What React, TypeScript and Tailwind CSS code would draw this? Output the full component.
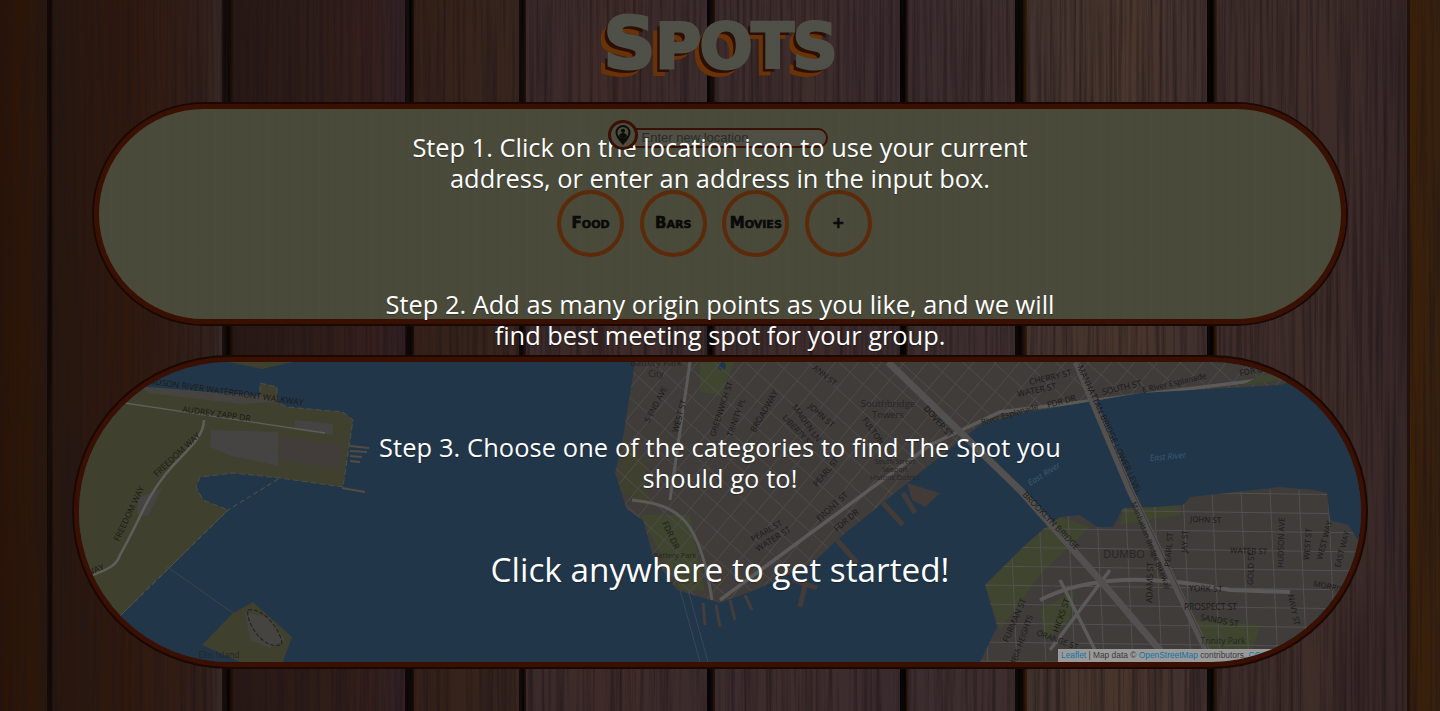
import React from 'react';

const planks = [
  { id: 'p0', className: 'w-[47px] bg-[linear-gradient(90deg,#2a1306,#2e1607_60%,#27170f)]' },
  { id: 'g0', className: 'w-[6px] bg-[linear-gradient(90deg,#140a08,#0d0503_50%,#21110a)]' },
  { id: 'p1', className: 'w-[169px] bg-[linear-gradient(90deg,#27170f,#30180d_45%,#33201a_90%,#382a27)]' },
  { id: 'g1', className: 'w-[11px] bg-[linear-gradient(90deg,#1c100c,#070302_60%,#261206)]' },
  { id: 'p2', className: 'w-[172px] bg-[linear-gradient(90deg,#281814,#2f1d18_55%,#351f1c_80%,#302125)]' },
  { id: 'g2', className: 'w-[9px] bg-[linear-gradient(90deg,#140a08,#030100_60%,#1f0e05)]' },
  { id: 'p3', className: 'w-[105px] bg-[linear-gradient(90deg,#342017,#38261e)]' },
  { id: 'g3', className: 'w-[7px] bg-[linear-gradient(90deg,#110806,#040201_60%,#2a1408)]' },
  { id: 'p4', className: 'w-[181px] bg-[linear-gradient(90deg,#3a2a2a,#3f2b29_50%,#3b2c2d)]' },
  { id: 'g4', className: 'w-[8px] bg-[linear-gradient(90deg,#0a0605,#030100_50%,#2b1408)]' },
  { id: 'p5', className: 'w-[185px] bg-[linear-gradient(90deg,#3b2c2c,#3f2d2c_50%,#392b2e)]' },
  { id: 'g5', className: 'w-[8px] bg-[linear-gradient(90deg,#050201,#040201_65%,#3a1d08)]' },
  { id: 'p6', className: 'w-[107px] bg-[linear-gradient(90deg,#3b2d2e,#3e2e2e)]' },
  { id: 'g6', className: 'w-[12px] bg-[linear-gradient(90deg,#0a0504,#040201_55%,#3d2009)]' },
  { id: 'p7', className: 'w-[180px] bg-[linear-gradient(90deg,#43332e,#49362c_60%,#3f2f2e)]' },
  { id: 'g7', className: 'w-[10px] bg-[linear-gradient(90deg,#080403,#040201_55%,#3d2009)]' },
  { id: 'p8', className: 'w-[190px] bg-[linear-gradient(90deg,#3d2c2a,#3f2d29_50%,#362727)]' },
  { id: 'g8', className: 'w-[3px] bg-[#221109]' },
  { id: 'p9', className: 'flex-1 bg-[linear-gradient(90deg,#3c2008,#35200f)]' },
];

// street labels: [x, y, rotation, text, size]
const labels: [number, number, number, string, number][] = [
  [143, 383, 8, 'HUDSON RIVER WATERFRONT WALKWAY', 8.5],
  [182, 412, 8, 'AUDREY ZAPP DR', 8.5],
  [157, 477, -43, 'FREEDOM WAY', 8.5],
  [119, 542, -65, 'FREEDOM WAY', 8.5],
  [88, 576, -22, 'WAY', 8.5],
  [649, 423, -62, 'S END AVE', 8],
  [678, 433, -75, 'WEST ST', 8.5],
  [715, 437, -72, 'GREENWICH ST', 8],
  [732, 437, -70, 'TRINITY PL', 8],
  [755, 433, -60, 'BROADWAY', 8.5],
  [792, 407, 55, 'MAIDEN LN', 8],
  [782, 418, 47, 'LIBERTY ST', 8],
  [808, 407, 42, 'JOHN ST', 8],
  [812, 369, 38, 'ANN ST', 8],
  [862, 420, 55, 'FULTON', 8],
  [923, 409, 48, 'DOVER ST', 8.5],
  [817, 487, -50, 'PEARL ST', 8],
  [820, 522, -43, 'FRONT ST', 8.5],
  [837, 532, -40, 'FDR DR', 8.5],
  [753, 542, -30, 'PEARL ST', 8],
  [758, 552, -32, 'WATER ST', 8.5],
  [662, 523, 65, 'FDR DR', 8.5],
  [1030, 385, -13, 'CHERRY ST', 8.5],
  [1018, 397, -12, 'WATER ST', 8.5],
  [1048, 408, -15, 'FDR DR', 8.5],
  [1103, 395, -13, 'SOUTH ST', 8.5],
  [1143, 393, -13, 'E River Esplanade', 8],
  [1240, 376, -10, 'FDR DR', 8.5],
  [982, 425, -16, 'River Esplanade', 8],
  [1077, 367, 65, 'MANHATTAN BRIDGE LOWER LEVEL', 8.5],
  [1022, 495, 46, 'BROOKLYN BRIDGE', 8.5],
  [1131, 503, 68, 'Manhattan Bridge Bikeway', 7.5],
  [1190, 522, 2, 'JOHN ST', 8],
  [1230, 553, 2, 'WATER ST', 8],
  [1170, 567, -85, 'PEARL ST', 8],
  [1187, 553, -88, 'JAY ST', 8],
  [1152, 603, -88, 'ADAMS ST', 8.5],
  [1253, 585, -88, 'GOLD ST', 8],
  [1283, 568, -88, 'HUDSON AVE', 8],
  [1309, 560, -85, 'WEST ST', 8],
  [1322, 560, -75, 'WEST WAY', 8],
  [1340, 568, -75, 'EAST WAY', 8],
  [1313, 586, 12, 'MORRIS', 8],
  [1189, 591, 2, 'YORK ST', 8.5],
  [1184, 610, 0, 'PROSPECT ST', 8.5],
  [1200, 620, 10, 'SANDS ST', 8.5],
  [1288, 595, 78, 'NAVY ST', 8],
  [1008, 643, -67, 'FURMAN ST', 8.5],
  [1058, 633, -70, 'HICKS ST', 8.5],
  [1036, 635, 20, 'ORANGE ST', 8],
  [1007, 688, -70, 'COLUMBIA HEIGHTS', 8],
];

const places: [number, number, string, number][] = [
  [656, 366, 'Battery Park', 9],
  [656, 377, 'City', 9],
  [888, 407, 'Southbridge', 9.5],
  [888, 418, 'Towers', 9.5],
  [895, 464, 'South Street', 7],
  [895, 472, 'Seaport', 7],
  [895, 480, 'Historic District', 7],
  [675, 558, 'Battery Park', 7.5],
  [1124, 558, 'DUMBO', 11],
  [1223, 644, 'Trinity Park', 8.5],
  [219, 658, 'Ellis Island', 8.5],
];

const manhattan =
  '635,362 623,437 615,473 627,510 643,520 653,557 677,590 720,603 760,588 813,563 837,540 927,467 980,425 1023,413 1140,393 1280,385 1310,375 1340,362';
const brooklyn =
  '980,662 997,627 985,585 1025,545 1042,530 1060,517 1080,515 1097,527 1113,527 1123,508 1157,507 1183,505 1190,497 1280,487 1315,490 1327,493 1330,520 1348,525 1358,540 1365,520 1365,665';
const jersey =
  '78,400 137,387 260,397 260,383 277,387 277,402 287,407 343,412 353,420 343,487 280,478 233,473 200,477 196,487 203,500 228,510 118,618 78,618';
const ellis = '253,602 292,637 283,662 240,662 202,645 233,613';

// street grids, rendered clipped to the land
const range = (from: number, to: number, step: number) => {
  const out: number[] = [];
  for (let v = from; v < to; v += step) out.push(v);
  return out;
};
const manhattanA = range(-60, 1200, 23);
const manhattanB = range(380, 1700, 31);
const brooklynV = range(980, 1365, 29);
const brooklynH = range(490, 665, 19);

function MapLayer() {
  return (
    <svg className="block w-full h-full" viewBox="79 362 1282 300" preserveAspectRatio="none">
      <defs>
        <clipPath id="clip-manhattan"><polygon points={manhattan} /></clipPath>
        <clipPath id="clip-brooklyn"><polygon points={brooklyn} /></clipPath>
      </defs>
      <rect x="0" y="300" width="1440" height="400" fill="#22364a" />

      {/* jersey side */}
      <polygon points={jersey} fill="#3f412e" stroke="#54544a" strokeWidth="0.8" strokeDasharray="6 3" />
      <polygon points="228,362 293,362 262,369" fill="#3f412e" />
      <polygon points="137,386 260,396 280,402 240,404 150,393" fill="#464441" />
      <polygon points="211,430 278,432 278,466 232,456 210,447" fill="#464442" />
      <polygon points="281,437 343,445 340,468 278,460" fill="#423d3a" />
      <polygon points="295,420 333,424 333,435 295,430" fill="#464442" />
      <polygon points="138,498 162,488 148,516 137,515" fill="#464442" />
      <path d="M118,402 L325,433" stroke="#5f5e5a" strokeWidth="1.300" fill="none" />
      <path d="M204,420 C204,440 180,455 165,475 C145,500 140,520 120,555 C115,570 100,570 88,578" stroke="#5f5e5a" strokeWidth="2.500" fill="none" />
      <path d="M118,618 L228,510 L280,478" stroke="#54544a" strokeWidth="1" strokeDasharray="5 3" fill="none" />
      <path d="M166,566 L233,613" stroke="#54544a" strokeWidth="0.500" fill="none" />
      <path d="M350,446 L369,448 M350,451 L367,452 M350,456 L362,457 M350,461 L360,462 M342,488 L365,492" stroke="#544b42" strokeWidth="1.800" fill="none" />

      {/* ellis island */}
      <polygon points={ellis} fill="#3f412e" />
      <polygon points="245,612 270,618 285,640 270,648 250,640" fill="#464441" />
      <path d="M248,610 C268,606 288,645 280,645 C262,650 245,620 248,610 Z" fill="none" stroke="#22221f" strokeWidth="1.100" strokeDasharray="4 2" />

      {/* manhattan */}
      <polygon points={manhattan} fill="#3f3c3a" />
      <g clipPath="url(#clip-manhattan)">
        <polygon points="700,362 735,362 720,395 700,392" fill="#3f452e" />
        <circle cx="722" cy="366" r="4" fill="#22364a" />
        <polygon points="640,515 690,515 705,590 680,590" fill="#3f452e" />
        <polygon points="623,440 645,460 650,510 620,490" fill="#3f412e" />
        {manhattanA.map((o) => (
          <line key={`a${o}`} x1={o + 200} y1="700" x2={o + 500} y2="340" stroke="#4f4d4b" strokeWidth="1" />
        ))}
        {manhattanB.map((o) => (
          <line key={`b${o}`} x1={o} y1="340" x2={o + 400} y2="700" stroke="#4f4d4b" strokeWidth="1" />
        ))}
        <path d="M690,362 L670,500 M632,500 C680,505 700,520 712,600" stroke="#5c5a58" strokeWidth="3" fill="none" />
        <path d="M720,600 L930,445 L1000,412 L1340,370" stroke="#5c5a58" strokeWidth="3.500" fill="none" />
      </g>
      <polygon points="907,483 940,493 925,507 912,500" fill="#423b37" />
      <path d="M883,503 L903,525 M903,493 L915,513 M837,540 L857,563 M793,580 L817,588 M805,585 L800,607" stroke="#423b37" strokeWidth="5" fill="none" />
      <path d="M703,603 L705,625 M716,605 L720,627 M730,600 L735,620 M745,595 L752,610" stroke="#443d3a" strokeWidth="3" fill="none" />

      {/* brooklyn */}
      <polygon points={brooklyn} fill="#3f3c3a" />
      <g clipPath="url(#clip-brooklyn)">
        <polygon points="985,585 1025,545 1060,517 1090,527 1040,575 1000,630" fill="#3f452e" />
        <polygon points="1123,508 1180,503 1180,515 1120,525" fill="#3f452e" />
        <polygon points="1195,620 1260,625 1250,662 1205,662" fill="#3f452e" />
        <polygon points="1040,610 1075,590 1070,620 1045,640" fill="#3f452e" />
        {brooklynV.map((x) => (
          <line key={`v${x}`} x1={x} y1="490" x2={x + 8} y2="665" stroke="#53514f" strokeWidth="1" />
        ))}
        {brooklynH.map((y) => (
          <line key={`h${y}`} x1="980" y1={y} x2="1365" y2={y + 5} stroke="#53514f" strokeWidth="1" />
        ))}
        <path d="M1040,600 C1090,575 1150,575 1230,590 L1290,592" stroke="#5c5a58" strokeWidth="4" fill="none" />
        <path d="M1050,650 L1110,570 M1100,660 L1060,580" stroke="#5c5a58" strokeWidth="3.500" fill="none" />
      </g>
      <polygon points="1260,376 1290,372 1280,380 1240,386" fill="#3f452e" />

      {/* bridges */}
      <path d="M888,362 L1020,490 L1100,580 L1170,662" stroke="#53514f" strokeWidth="7" fill="none" />
      <path d="M1076,362 L1130,490 L1212,662" stroke="#53514f" strokeWidth="7" fill="none" />
      <path d="M1078,362 L1132,490 L1214,662" stroke="#3e3c38" strokeWidth="1" fill="none" />
      <path d="M680,590 L700,662 M688,590 L708,662" stroke="#3c4c5a" strokeWidth="0.800" fill="none" />

      <g fontFamily="'Open Sans', sans-serif" fill="#1a1a17">
        {labels.map(([x, y, r, t, s]) => (
          <text key={`${t}${x}`} x={x} y={y} fontSize={s} transform={`rotate(${r} ${x} ${y})`}>{t}</text>
        ))}
        {places.map(([x, y, t, s]) => (
          <text key={`${t}${x}`} x={x} y={y} fontSize={s} textAnchor="middle" fill="#262522">{t}</text>
        ))}
        <text x="1030" y="486" fontSize="8.500" fontStyle="italic" fill="#3d5b70" transform="rotate(-32 1030 486)">East River</text>
        <text x="1150" y="461" fontSize="8.500" fontStyle="italic" fill="#3d5b70" transform="rotate(-5 1150 461)">East River</text>
      </g>
    </svg>
  );
}

function PinIcon() {
  return (
    <svg width="16" height="20" viewBox="0 0 16 20" aria-hidden="true">
      <path d="M8 0a7.500 7.500 0 0 0-7.500 7.500C.5 12.500 8 20 8 20s7.500-7.500 7.500-12.500A7.500 7.500 0 0 0 8 0z" fill="#0d0d0b" />
      <circle cx="8" cy="7.500" r="5.500" fill="#4c4c3f" />
      <circle cx="8" cy="5.800" r="2.100" fill="#0d0d0b" />
      <path d="M3.900 11.200c.5-2.300 2.300-3.100 4.100-3.100s3.600.8 4.100 3.100a5.500 5.500 0 0 1-8.200 0z" fill="#0d0d0b" />
    </svg>
  );
}

const categories = ['Food', 'Bars', 'Movies', '+'];

export default function App() {
  return (
    <div className="relative h-[711px] overflow-hidden bg-black font-['Open_Sans',sans-serif]">
      {/* wood planks */}
      <div className="absolute inset-0 flex">
        {planks.map((p) => (
          <div key={p.id} className={p.className} />
        ))}
      </div>
      <svg className="absolute inset-0 w-full h-full" aria-hidden="true">
        <filter id="grain" colorInterpolationFilters="sRGB">
          <feTurbulence type="fractalNoise" baseFrequency="0.3 0.005" numOctaves="3" seed="7" />
          <feColorMatrix values="0 0 0 0 0.12  0 0 0 0 0.08  0 0 0 0 0.09  1.5 0 0 0 -0.6" />
        </filter>
        <rect width="100%" height="100%" filter="url(#grain)" />
      </svg>

      <div className="relative flex flex-col items-center">
        {/* title */}
        <h1 className="h-[104px] pt-[7px] flex items-baseline text-[72px] leading-[72px] font-bold text-[#4f5048] [font-family:'DejaVu_Sans',sans-serif] [-webkit-text-stroke:3px_#4f5048] [text-shadow:-4px_4px_0_#2b0f04,-8px_8px_0_#6a3207]">
          S<span className="text-[62px] tracking-[-1px]">POTS</span>
        </h1>

        {/* search panel */}
        <section className="w-[1252px] h-[220px] rounded-full border-[5px] border-[#3a1003] shadow-[0_0_0_2px_#1b0802] bg-[repeating-linear-gradient(90deg,#4a4a3b_0px,#4a4a3b_6px,#49493a_8px,#4b4b3c_13px)] flex flex-col items-center">
          <div className="mt-[11px] ml-[-5px] flex items-center">
            <button className="z-10 w-[30px] h-[30px] rounded-full border-[3px] border-[#3a1003] bg-[#4c4c3f] flex items-center justify-center">
              <PinIcon />
            </button>
            <input
              readOnly
              placeholder="Enter new location"
              className="ml-[-8px] mt-[5px] w-[198px] h-[20px] pl-[10px] rounded-r-full rounded-l-md border-2 border-[#3a1003] bg-[#504f45] text-[13px] font-['Liberation_Sans',sans-serif] placeholder:text-[#2b2b26] outline-none"
            />
          </div>
          <div className="mt-[40px] ml-[-11px] flex gap-[15.600px]">
            {categories.map((c) => (
              <button
                key={c}
                className="w-[67px] h-[67px] rounded-full border-[4px] border-[#5b2a0b] flex items-center justify-center text-[15px] font-bold text-[#0a0a08] [font-family:'DejaVu_Sans',sans-serif] [font-variant:small-caps] [-webkit-text-stroke:0.6px_#0a0a08]"
              >
                {c}
              </button>
            ))}
          </div>
        </section>

        {/* map panel */}
        <section className="relative mt-[33px] w-[1292px] h-[310px] rounded-full overflow-hidden border-[5px] border-[#3a1003] shadow-[0_0_0_2px_#1b0802] bg-[#22364a]">
          <MapLayer />
          <div className="absolute left-[979px] bottom-0 h-[13px] w-[320px] pl-[3px] bg-[#9a9a9a] text-[8.400px] leading-[13px] whitespace-nowrap text-[#3a3a3a] font-['Liberation_Sans',sans-serif]">
            <span className="text-[#14739f]">Leaflet</span> | Map data © <span className="text-[#14739f]">OpenStreetMap</span> contributors, <span className="text-[#14739f]">CC-BY-SA</span>
          </div>
        </section>
      </div>

      {/* instructions overlay */}
      <div className="absolute inset-0 flex flex-col items-center text-center text-white text-[25.400px] leading-[31px] font-['Open_Sans',sans-serif] [text-shadow:0_1px_1px_rgba(0,0,0,0.35)]">
        <p className="mt-[132px]">Step 1. Click on the location icon to use your current<br />address, or enter an address in the input box.</p>
        <p className="mt-[95px]">Step 2. Add as many origin points as you like, and we will<br />find best meeting spot for your group.</p>
        <p className="mt-[81px] tracking-[0.1px]">Step 3. Choose one of the categories to find The Spot you<br />should go to!</p>
        <p className="mt-[55px] text-[33.300px] leading-[40px]">Click anywhere to get started!</p>
      </div>
    </div>
  );
}
